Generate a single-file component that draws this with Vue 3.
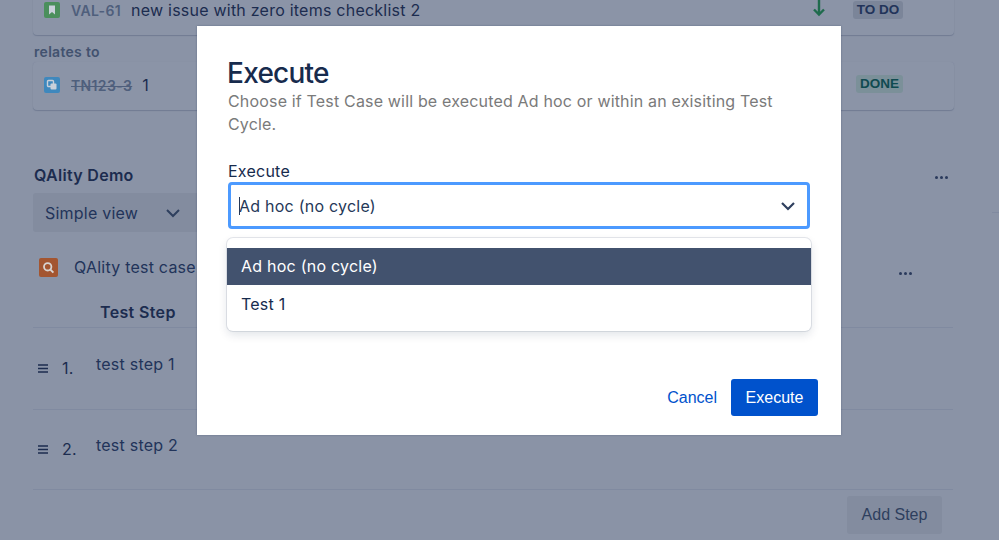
<script setup>
const steps = [
  { n: '1.', text: 'test step 1' },
  { n: '2.', text: 'test step 2' },
]
const options = [
  { label: 'Ad hoc (no cycle)', active: true },
  { label: 'Test 1', active: false },
]
</script>

<template>
  <div class="page">
    <div class="card first">
      <svg class="issue-icon" width="16" height="16" viewBox="0 0 16 16"><rect width="16" height="16" rx="2" fill="#4b8f5c"/><path d="M5 3.5h6v9L8 10l-3 2.5z" fill="#c9d0da"/></svg>
      <span class="key">VAL-61</span>
      <span class="summary">new issue with zero items checklist 2</span>
      <svg class="arrow" width="16" height="18" viewBox="0 0 16 18"><path d="M8 1v14M3 10.5 8 15.5l5-5" fill="none" stroke="#1f6b4d" stroke-width="2.4"/></svg>
      <span class="badge todo">TO DO</span>
    </div>
    <div class="relates">relates to</div>
    <div class="card">
      <svg class="issue-icon" width="16" height="16" viewBox="0 0 16 16"><rect width="16" height="16" rx="2" fill="#3f88bd"/><rect x="3.5" y="3.5" width="6" height="6" rx="1" fill="none" stroke="#c9d0da" stroke-width="1.4"/><rect x="6.5" y="6.5" width="6" height="6" rx="1" fill="#c9d0da"/></svg>
      <span class="key done-key">TN123-3</span>
      <span class="summary">1</span>
      <span class="badge done">DONE</span>
    </div>

    <div class="panel-head">
      <span class="panel-title">QAlity Demo</span>
      <span class="dots head-dots"><i></i><i></i><i></i></span>
    </div>
    <div class="view-row">
      <div class="view-select">
        <span>Simple view</span>
        <svg width="16" height="10" viewBox="0 0 16 10"><path d="M2 2l6 6 6-6" fill="none" stroke="#2e3f5e" stroke-width="2"/></svg>
      </div>
      <span class="sliver"></span>
    </div>
    <div class="case-row">
      <svg width="19" height="19" viewBox="0 0 19 19"><rect width="19" height="19" rx="2" fill="#a35530"/><circle cx="8.7" cy="8.8" r="3.7" fill="none" stroke="#d8d3d0" stroke-width="1.8"/><path d="M11.4 11.6l3 3" stroke="#d8d3d0" stroke-width="2"/></svg>
      <span class="case-name">QAlity test case</span>
      <span class="dots case-dots"><i></i><i></i><i></i></span>
    </div>
    <div class="step-head">Test Step</div>
    <div v-for="s in steps" :key="s.n" class="step">
      <svg class="grip" width="10" height="9" viewBox="0 0 10 9"><path d="M0 1h10M0 4.5h10M0 8h10" stroke="#1c2c4f" stroke-width="1.3"/></svg>
      <span class="num">{{ s.n }}</span>
      <span class="step-text">{{ s.text }}</span>
    </div>
    <div class="add-row"><span class="add-btn">Add Step</span></div>

    <div class="modal">
      <h1>Execute</h1>
      <p class="desc">Choose if Test Case will be executed Ad hoc or within an exisiting Test Cycle.</p>
      <label class="field-label">Execute</label>
      <div class="input">
        <span class="caret"></span>
        <span class="value">Ad hoc (no cycle)</span>
        <svg width="16" height="10" viewBox="0 0 16 10"><path d="M2 2l6 6 6-6" fill="none" stroke="#2e3f5e" stroke-width="2.2"/></svg>
      </div>
      <div class="menu">
        <div v-for="o in options" :key="o.label" class="option" :class="{ active: o.active }">{{ o.label }}</div>
      </div>
      <div class="actions">
        <span class="cancel">Cancel</span>
        <span class="execute">Execute</span>
      </div>
    </div>
  </div>
</template>

<style>
html, body { margin: 0; overflow: hidden; }
</style>

<style scoped>
.page {
  position: relative;
  width: 999px;
  height: 540px;
  overflow: hidden;
  box-sizing: border-box;
  padding-left: 33px;
  background: #8a93a6;
  color: #1c2c4f;
  font-family: Inter, "Liberation Sans", sans-serif;
  font-size: 16px;
  letter-spacing: 0.23px;
}
.card {
  display: flex;
  align-items: center;
  width: 921px;
  height: 48px;
  box-sizing: border-box;
  padding: 0 51px 2px 11px;
  border-radius: 4px;
  background: #8b94a7;
  box-shadow: 0 1px 1px #727c93, 0 0 1px #808aa0;
}
.card.first { margin-top: -13px; }
.issue-icon { flex: none; }
.key { margin-left: 11px; font-size: 14px; font-weight: 600; color: #4f5f7c; letter-spacing: 0.35px; }
.done-key { text-decoration: line-through; }
.summary { margin-left: 10px; }
.arrow { margin-left: auto; margin-right: 26px; margin-top: -5px; }
.badge {
  display: inline-block;
  box-sizing: border-box;
  border-radius: 3px;
  font-family: "Liberation Sans", sans-serif;
  font-size: 13.5px;
  font-weight: 700;
  line-height: 18px;
  text-align: center;
  letter-spacing: 0;
}
.todo { width: 50px; background: #7b8599; color: #22345a; }
.done { width: 47px; margin-left: auto; margin-top: -2px; background: #7b9099; color: #0f4a50; }
.relates { margin-top: 8px; margin-left: 1px; height: 19px; line-height: 18px; font-size: 14px; font-weight: 600; color: #42526f; letter-spacing: 0.3px; }
.panel-head { display: flex; align-items: center; justify-content: space-between; width: 914px; margin: 55px 0 0 1px; height: 20px; }
.panel-title { font-weight: 600; font-size: 16px; letter-spacing: 0.3px; }
.dots { display: inline-flex; gap: 2px; }
.dots i { width: 3px; height: 3px; border-radius: 50%; background: #2a3a5c; }
.head-dots { margin-top: 5px; }
.view-row { display: flex; align-items: center; justify-content: space-between; margin-top: 8px; width: 966px; }
.view-select {
  display: flex;
  align-items: center;
  justify-content: space-between;
  box-sizing: border-box;
  width: 170px;
  height: 39px;
  padding: 0 22px 0 12px;
  border-radius: 3px;
  background: #838c9f;
  color: #22345a;
}
.sliver { width: 7px; height: 1px; background: #808aa0; }
.case-row { display: flex; align-items: center; margin-top: 25px; margin-left: 6px; width: 873px; height: 20px; }
.case-name { margin-left: 16px; margin-top: -1px; color: #22345a; }
.case-dots { margin-left: auto; margin-top: 12px; }
.step-head {
  margin-top: 25px;
  width: 920px;
  height: 26px;
  box-sizing: border-box;
  padding-left: 67px;
  font-weight: 600;
  letter-spacing: 0.35px;
  border-bottom: 1px solid #808aa0;
}
.step {
  display: flex;
  align-items: flex-start;
  width: 920px;
  height: 82px;
  box-sizing: border-box;
  padding: 26px 0 0 5px;
  border-bottom: 1px solid #808aa0;
}
.step + .step { height: 80px; padding-top: 25px; }
.grip { margin-top: 10px; }
.num { margin-left: 14px; margin-top: 4px; width: 34px; }
.step-text { color: #22345a; }
.add-row { display: flex; justify-content: flex-end; width: 909px; margin-top: 6px; }
.add-btn {
  display: flex;
  align-items: center;
  justify-content: center;
  width: 95px;
  height: 38px;
  border-radius: 3px;
  background: #838c9f;
  color: #2e3f5e;
  font-family: "Liberation Sans", sans-serif;
  letter-spacing: 0;
}
.modal {
  position: absolute;
  left: 197px;
  top: 26px;
  width: 644px;
  height: 409px;
  box-sizing: border-box;
  padding: 30px 31px 0;
  background: #fff;
  box-shadow: 0 0 2px rgba(9, 30, 66, 0.3);
  display: flex;
  flex-direction: column;
}
h1 { margin: 0 0 0 -1px; font-size: 28px; font-weight: 500; line-height: 34px; color: #172b4d; letter-spacing: -0.75px; }
.desc { margin: 0; width: 560px; line-height: 23px; color: #7a7a7a; letter-spacing: 0.17px; }
.field-label { margin-top: 24px; line-height: 22px; color: #172b4d; }
.input {
  display: flex;
  align-items: center;
  justify-content: space-between;
  margin-top: 0;
  width: 582px;
  height: 47px;
  box-sizing: border-box;
  border: 3px solid #4c9aff;
  border-radius: 4px;
  padding: 0 11px 0 8px;
  color: #253858;
  position: relative;
}
.caret { position: absolute; left: 8px; top: 12px; width: 1px; height: 18px; background: #253858; }
.menu {
  margin: 9px 0 0 -1px;
  width: 584px;
  height: 93px;
  box-sizing: border-box;
  padding-top: 10px;
  border-radius: 6px;
  background: #fff;
  box-shadow: 0 0 0 1px rgba(9, 30, 66, 0.1), 0 4px 10px rgba(9, 30, 66, 0.12);
}
.option { height: 37px; line-height: 36px; padding-left: 14px; color: #172b4d; }
.option + .option { line-height: 38px; }
.option.active { background: #42526e; color: #fff; }
.actions {
  display: flex;
  align-items: center;
  justify-content: flex-end;
  gap: 14px;
  margin: 48px -8px 0 0;
  font-family: "Liberation Sans", sans-serif;
  letter-spacing: 0;
}
.cancel { color: #0052cc; }
.execute {
  display: flex;
  align-items: center;
  justify-content: center;
  width: 87px;
  height: 37px;
  border-radius: 3px;
  background: #0052cc;
  color: #fff;
}
</style>
